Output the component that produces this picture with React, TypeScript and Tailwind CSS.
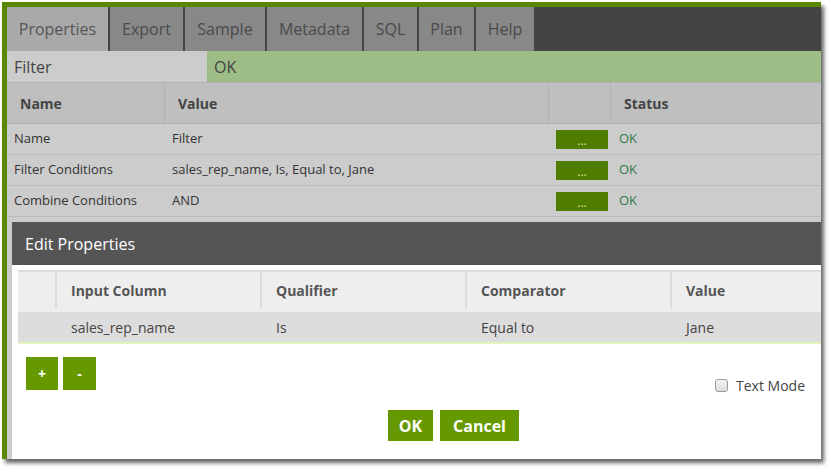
import React from "react";

const tabs = [
  { label: "Properties", w: "w-[101px]", active: true },
  { label: "Export", w: "w-[73px]" },
  { label: "Sample", w: "w-[80px]" },
  { label: "Metadata", w: "w-[95px]" },
  { label: "SQL", w: "w-[53px]" },
  { label: "Plan", w: "w-[55px]" },
  { label: "Help", w: "w-[58px]" },
];

const props = [
  { name: "Name", value: "Filter" },
  { name: "Filter Conditions", value: "sales_rep_name, Is, Equal to, Jane" },
  { name: "Combine Conditions", value: "AND" },
];

export default function App() {
  return (
    <div
      className="w-[834px] h-[474px] bg-white overflow-hidden pt-[2px] pl-[2px]"
      style={{ fontFamily: '"Open Sans", "Liberation Sans", sans-serif' }}
    >
      <div className="w-[819px] h-[457px] border-t-[5px] border-l-[5px] border-[#5a8700] shadow-[3px_4px_4px_rgba(0,0,0,0.6)] bg-[#cccccc] flex flex-col overflow-hidden">
        {/* tabs */}
        <div className="h-[44px] bg-[#444444] flex gap-[2px] shrink-0">
          {tabs.map((t) => (
            <div
              key={t.label}
              className={`${t.w} h-full flex items-center justify-center text-[16px] ${
                t.active ? "bg-[#a9a9a9] text-[#555555]" : "bg-[#888888] text-[#4a4a4a]"
              }`}
            >
              {t.label}
            </div>
          ))}
        </div>

        {/* name / status strip */}
        <div className="h-[31px] flex text-[16px] text-[#444444] shrink-0">
          <div className="w-[200px] bg-[#cccccc] flex items-center pl-[7px]">Filter</div>
          <div className="flex-1 bg-[#9ebd86] flex items-center pl-[7px]">OK</div>
        </div>

        {/* property table header */}
        <div className="h-[42px] bg-[#bfbfbf] flex border-y border-[#b2b2b2] text-[14px] font-bold text-[#444444] shrink-0">
          <div className="w-[158px] flex items-center pl-[13px] border-r border-[#b2b2b2]">Name</div>
          <div className="w-[384px] flex items-center pl-[13px] border-r border-[#b2b2b2]">Value</div>
          <div className="w-[62px] border-r border-[#b2b2b2]" />
          <div className="flex-1 flex items-center pl-[13px]">Status</div>
        </div>

        {/* property rows */}
        {props.map((p) => (
          <div
            key={p.name}
            className="h-[31px] flex items-center border-b border-[#bbbbbb] text-[13px] text-[#333333] shrink-0"
          >
            <div className="w-[158px] pl-[7px]">{p.name}</div>
            <div className="w-[384px] pl-[7px]">{p.value}</div>
            <div className="w-[62px] pl-[7px]">
              <div className="w-[52px] h-[19px] bg-[#4e7d00] text-[#e6e2a8] text-[12px] leading-[22px] text-center">
                ...
              </div>
            </div>
            <div className="flex-1 pl-[8px] text-[#2f7a4a]">OK</div>
          </div>
        ))}

        {/* edit properties panel */}
        <div className="mt-[5px] ml-[5px] flex-1 flex flex-col bg-white">
          <div className="h-[43px] bg-[#555555] text-white text-[16px] flex items-center pl-[13px] shrink-0">
            Edit Properties
          </div>
          <div className="flex-1 flex flex-col">
            {/* conditions table */}
            <div className="mt-[5px] ml-[6px]">
              <div className="h-[42px] flex bg-[#eeeeee] border-t-2 border-[#dddddd] text-[14px] font-bold text-[#555555] pb-[3px]">
                <div className="w-[39px] border-r-2 border-[#dddddd]" />
                <div className="w-[205px] flex items-center pl-[14px] border-r-2 border-[#dddddd]">Input Column</div>
                <div className="w-[205px] flex items-center pl-[14px] border-r-2 border-[#dddddd]">Qualifier</div>
                <div className="w-[205px] flex items-center pl-[14px] border-r-2 border-[#dddddd]">Comparator</div>
                <div className="flex-1 flex items-center pl-[14px]">Value</div>
              </div>
              <div className="h-[32px] flex items-center bg-[#dddddd] border-b-2 border-[#e3f5bf] text-[14px] text-[#444444]">
                <div className="w-[39px]" />
                <div className="w-[205px] pl-[14px]">sales_rep_name</div>
                <div className="w-[205px] pl-[14px]">Is</div>
                <div className="w-[205px] pl-[14px]">Equal to</div>
                <div className="flex-1 pl-[14px]">Jane</div>
              </div>
            </div>

            {/* add / remove + text mode */}
            <div className="mt-[13px] h-[33px] flex justify-between pl-[14px] pr-[16px]">
              <div className="flex gap-[5px]">
                <button className="w-[32px] h-[33px] bg-[#669900] text-white font-bold text-[14px]">+</button>
                <button className="w-[33px] h-[33px] bg-[#669900] text-white font-bold text-[14px]">-</button>
              </div>
              <label className="mt-[19px] h-[18px] flex items-center gap-[8px] text-[14px] text-[#444444]">
                <span className="w-[13px] h-[13px] rounded-[3px] border border-[#9a9a9a] bg-gradient-to-b from-[#f4f4f4] to-[#dcdcdc]" />
                Text Mode
              </label>
            </div>

            {/* OK / Cancel */}
            <div className="mt-[20px] pl-[376px] flex gap-[7px]">
              <button className="w-[45px] h-[31px] bg-[#669900] text-white font-bold text-[16px]">OK</button>
              <button className="w-[79px] h-[31px] bg-[#669900] text-white font-bold text-[16px]">Cancel</button>
            </div>
          </div>
        </div>
      </div>
    </div>
  );
}
